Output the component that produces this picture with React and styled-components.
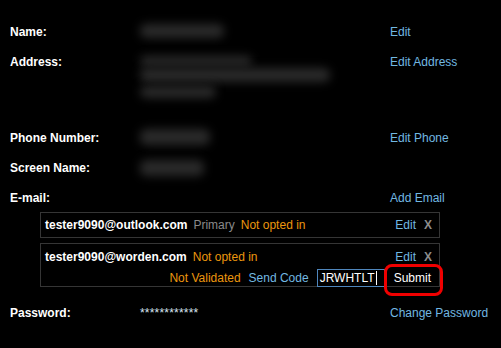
import styled, { createGlobalStyle } from 'styled-components';

const GlobalStyle = createGlobalStyle`
    html, body {
        margin: 0;
        padding: 0;
        background: #000000;
    }

    body {
        font-family: "Liberation Sans", Arial, sans-serif;
        font-size: 12px;
        line-height: 16px;
        color: #FFFFFF;
    }
`;

const profile = [
    { label: 'Name:', action: 'Edit', blobs: [{ w: 84, h: 14, top: 0 }] },
    {
        label: 'Address:',
        action: 'Edit Address',
        height: 62,
        blobs: [
            { w: 112, h: 10, top: 2 },
            { w: 190, h: 14, top: 14 },
            { w: 76, h: 12, top: 32 },
        ],
    },
    { label: 'Phone Number:', action: 'Edit Phone', blobs: [{ w: 70, h: 16, top: -1 }] },
    { label: 'Screen Name:', blobs: [{ w: 64, h: 16, top: 0 }] },
];

export default function App () {
    return (
        <>
            <GlobalStyle />
            <Page>
                {profile.map((row) => (
                    <Row key={row.label}>
                        <Label>{row.label}</Label>
                        <Value height={row.height}>
                            {row.blobs.map((blob, i) => (
                                <Blur key={i} style={{ width: blob.w, height: blob.h, top: blob.top }} />
                            ))}
                        </Value>
                        {row.action ? <Link>{row.action}</Link> : <span />}
                    </Row>
                ))}

                <Row>
                    <Label>E-mail:</Label>
                    <span />
                    <Link>Add Email</Link>
                </Row>

                <EmailList>
                    <EmailBox>
                        <EmailLine>
                            <Address>tester9090@outlook.com</Address>
                            <Muted>Primary</Muted>
                            <Warn>Not opted in</Warn>
                            <Actions>
                                <Link>Edit</Link>
                                <Remove>X</Remove>
                            </Actions>
                        </EmailLine>
                    </EmailBox>

                    <EmailBox>
                        <EmailLine>
                            <Address>tester9090@worden.com</Address>
                            <Warn>Not opted in</Warn>
                            <Actions>
                                <Link>Edit</Link>
                                <Remove>X</Remove>
                            </Actions>
                        </EmailLine>
                        <VerifyLine>
                            <Warn>Not Validated</Warn>
                            <Link>Send Code</Link>
                            <CodeInput>
                                JRWHTLT<Caret />
                            </CodeInput>
                            <Submit>Submit</Submit>
                        </VerifyLine>
                    </EmailBox>
                </EmailList>

                <Row>
                    <Label>Password:</Label>
                    <Stars>************</Stars>
                    <Link>Change Password</Link>
                </Row>
            </Page>
        </>
    );
}

const Page = styled.div`
    width: 501px;
    height: 348px;
    padding: 24px 0 0 10px;
    box-sizing: border-box;
    display: flex;
    flex-direction: column;
    gap: 14px;
    overflow: hidden;
`;

const Row = styled.div`
    display: grid;
    grid-template-columns: 130px 250px auto;
    align-items: start;
`;

const Label = styled.span`
    font-weight: 700;
    color: #FFFFFF;
`;

const Value = styled.div`
    position: relative;
    height: ${({ height }) => height || 16}px;
`;

const Blur = styled.div`
    position: absolute;
    left: 0;
    background: #2A2A2A;
    border-radius: 6px;
    filter: blur(5px);
`;

const Link = styled.span`
    color: #72B8E2;
    white-space: nowrap;
`;

const EmailList = styled.div`
    margin: -8px 0 4px 30px;
    width: 400px;
    display: flex;
    flex-direction: column;
    gap: 5px;
`;

const EmailBox = styled.div`
    border: 1px solid #353535;
    padding: 4px 7px 4px 4px;
    display: flex;
    flex-direction: column;
    gap: 4px;

    &:last-child {
        padding: 5px 7px 0 4px;
    }
`;

const EmailLine = styled.div`
    display: flex;
    align-items: center;
    gap: 6px;
`;

const Address = styled.span`
    font-weight: 700;
    color: #FFFFFF;
`;

const Muted = styled.span`
    color: #8A8A8A;
`;

const Warn = styled.span`
    color: #EC960E;
`;

const Actions = styled.div`
    margin-left: auto;
    display: flex;
    gap: 8px;
`;

const Remove = styled.span`
    color: #8C8C8C;
    font-weight: 700;
`;

const VerifyLine = styled.div`
    display: flex;
    align-items: center;
    justify-content: flex-end;
    gap: 8px;
    height: 18px;
    margin-bottom: -1px;
`;

const CodeInput = styled.div`
    width: 62px;
    height: 16px;
    border: 1px solid #4F86BC;
    padding: 0 2px;
    margin-right: -1px;
    color: #FFFFFF;
    display: flex;
    align-items: center;
`;

const Caret = styled.span`
    width: 1px;
    height: 14px;
    margin-left: 1px;
    background: #FFFFFF;
`;

const Submit = styled.span`
    position: relative;
    color: #FFFFFF;
    padding: 0 1px 0 2px;

    &::after {
        content: '';
        position: absolute;
        top: -6px;
        bottom: -10px;
        left: -8px;
        right: -11px;
        border: 3px solid #F00000;
        border-radius: 8px;
    }
`;

const Stars = styled.span`
    color: #D8E4F0;
    letter-spacing: 0.2px;
`;
